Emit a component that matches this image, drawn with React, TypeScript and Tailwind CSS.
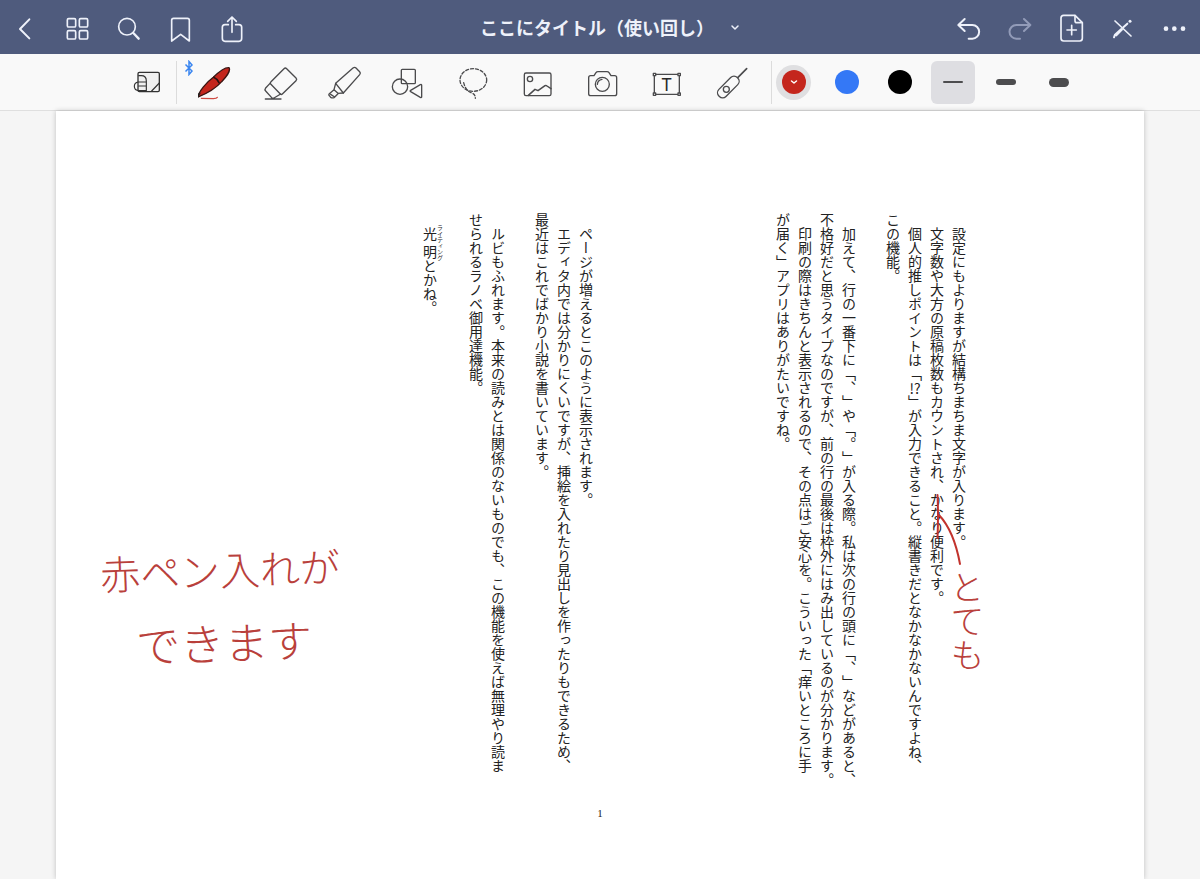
import type { ReactNode } from "react";

const Icon = ({ children, stroke = 4 }: { children: ReactNode; stroke?: number }) => (
  <svg
    viewBox="0 0 120 120"
    className="size-10 shrink-0"
    fill="none"
    stroke="currentColor"
    strokeWidth={stroke}
    strokeLinecap="round"
    strokeLinejoin="round"
    aria-hidden="true"
  >
    {children}
  </svg>
);

const leftActions = [
  { label: "戻る", icon: <path d="M70 37 42 66l28 28" strokeWidth="6" /> },
  {
    label: "サムネイル",
    icon: (
      <>
        <rect x="28" y="35" width="25" height="25" rx="4" />
        <rect x="64" y="35" width="25" height="25" rx="4" />
        <rect x="28" y="71" width="25" height="25" rx="4" />
        <rect x="64" y="71" width="25" height="25" rx="4" />
      </>
    ),
  },
  {
    label: "検索",
    icon: (
      <>
        <circle cx="51" cy="59" r="25" />
        <path d="M70 78l16 17" strokeWidth="7" />
      </>
    ),
  },
  { label: "ブックマーク", icon: <path d="M29 40q0-6 6-6h41q6 0 6 6v62L56 82 29 102z" /> },
  {
    label: "共有",
    icon: (
      <>
        <path d="M43 53H33q-8 0-8 8v33q0 9 8 9h42q8 0 8-9V61q0-8-8-8H65" />
        <path d="M54 76V30M41 43l13-13 13 13" />
      </>
    ),
  },
];

const rightActions = [
  {
    label: "元に戻す",
    icon: <path d="M56 36 37 54l19 18M38 54h41a20.500 20.500 0 0 1 0 41H68" strokeWidth="6" />,
  },
  {
    label: "やり直す",
    muted: true,
    icon: <path d="M78 36l19 18-19 18M96 54H55a20.500 20.500 0 0 0 0 41h11" strokeWidth="6" />,
  },
  {
    label: "ページを追加",
    icon: (
      <>
        <path d="M75 25H41q-8 0-8 8v61q0 8 8 8h48q8 0 8-8V47z" />
        <path d="M75 26v15q0 6 6 6h15M65 55v28M51 69h28" />
      </>
    ),
  },
  {
    label: "閲覧モード",
    icon: (
      <>
        <path d="M39 42l48 45" />
        <path d="M36 91l3-8 19-17M43 85l17-17M64 61l12-11" strokeWidth="6" />
        <path d="M84 43v0" strokeWidth="9" />
      </>
    ),
  },
  {
    label: "その他",
    icon: (
      <g fill="currentColor" stroke="none">
        <circle cx="36" cy="65" r="7" />
        <circle cx="61" cy="65" r="7" />
        <circle cx="87" cy="65" r="7" />
      </g>
    ),
  },
];

const tools = [
  {
    label: "ペン",
    icon: (
      <>
        <path
          d="M-2 106C3 89 24 62 46 46 61 31 80 16 93 17c5 8-6 26-22 42C51 82 21 97-2 106z"
          fill="#c4261d"
          stroke="#3a1512"
        />
        <path d="M47 46q10 4 16 16" stroke="#2a1210" strokeWidth="5" />
        <path d="M-2 106l7-12" stroke="#222" strokeWidth="5" />
        <path d="M10 109l36 1q10-1 12-4" stroke="#cf4a42" strokeWidth="3.500" />
      </>
    ),
  },
  {
    label: "消しゴム",
    icon: (
      <>
        <path d="M27 59 66 20q4-4 8 0l28 28q4 4 0 8L61 96q-3 3-6 0L26 66q-3-3 1-7z" />
        <path d="M24 64 11 78q-4 5 0 9l18 20q3 3 7 1l20-12M10 111h47" />
      </>
    ),
  },
  {
    label: "蛍光ペン",
    icon: (
      <>
        <path d="M29 64 81 18q5-4 9 0l11 11q4 4 0 9L52 93z" />
        <path d="M29 64l-5 19 12 11 16-1M24 83 10 95q-3 3 0 6l4 5q5 3 10 1l12-12M14 97l12 8" />
      </>
    ),
  },
  {
    label: "図形",
    icon: (
      <>
        <rect x="34" y="22" width="42" height="43" rx="3" />
        <circle cx="30" cy="74" r="23" />
        <path d="M91 68q4-2 4 2v34q0 4-4 2L62 89q-3-2 0-4z" />
      </>
    ),
  },
  {
    label: "なげなわ",
    icon: (
      <g strokeDasharray="9 6">
        <ellipse cx="58" cy="54" rx="40" ry="34" />
        <path d="M29 62c4 16 10 25 24 31 8 3 11 8 11 16" />
      </g>
    ),
  },
  {
    label: "画像",
    icon: (
      <>
        <rect x="19" y="33" width="80" height="68" rx="5" />
        <circle cx="36" cy="51" r="8" />
        <path d="M31 100l20-18 9 4 21-15q3-2 6 1l12 8" strokeWidth="4.500" />
      </>
    ),
  },
  {
    label: "カメラ",
    icon: (
      <>
        <path d="M26 41h10l6-9q2-3 6-3h27q4 0 6 3l6 9h11q6 0 6 6v48q0 6-6 6H26q-6 0-6-6V47q0-6 6-6z" />
        <circle cx="61" cy="67" r="21" />
        <path d="M46 67q1-13 14-15" />
      </>
    ),
  },
  {
    label: "テキスト",
    icon: (
      <>
        <rect x="25" y="37" width="75" height="60" />
        <g fill="#f9f9f9">
          <rect x="22" y="34" width="7" height="7" />
          <rect x="96" y="34" width="7" height="7" />
          <rect x="22" y="93" width="7" height="7" />
          <rect x="96" y="93" width="7" height="7" />
        </g>
        <text
          x="62"
          y="86"
          textAnchor="middle"
          fontSize="52"
          fontFamily="Inter, sans-serif"
          fill="#2a2a2a"
          stroke="none"
        >
          T
        </text>
      </>
    ),
  },
  {
    label: "レーザーポインタ",
    icon: (
      <>
        <rect x="16" y="60" width="78" height="30" rx="14" transform="rotate(-45 55 75)" />
        <circle cx="49" cy="82" r="9" />
        <path d="M84 46l26-26" strokeWidth="5" />
      </>
    ),
  },
];

const thicknesses = [
  { label: "細い", bar: "h-0.5", selected: true },
  { label: "普通", bar: "h-1.5" },
  { label: "太い", bar: "h-[9px]" },
];

const rightPage: ReactNode[] = [
  "　設定にもよりますが結構ちまちま文字が入ります。",
  "　文字数や大方の原稿枚数もカウントされ、かなり便利です。",
  <>
    {"　個人的推しポイントは「"}
    <span className="[text-combine-upright:all]">!?</span>
    {"」が入力できること。縦書きだとなかなかないんですよね、"}
  </>,
  "この機能。",
  "",
  "　加えて、行の一番下に「、」や「。」が入る際。私は次の行の頭に「、」などがあると、",
  "不格好だと思うタイプなのですが、前の行の最後は枠外にはみ出しているのが分かります。",
  "　印刷の際はきちんと表示されるので、その点はご安心を。こういった「痒いところに手",
  "が届く」アプリはありがたいですね。",
];

const leftPage: ReactNode[] = [
  "　ページが増えるとこのように表示されます。",
  "　エディタ内では分かりにくいですが、挿絵を入れたり見出しを作ったりもできるため、",
  "最近はこれでばかり小説を書いています。",
  "",
  "　ルビもふれます。本来の読みとは関係のないものでも、この機能を使えば無理やり読ま",
  "せられるラノベ御用達機能。",
  "",
  <>
    {"　"}
    <ruby>
      光明<rt className="text-[6px]">ライティング</rt>
    </ruby>
    とかね。
  </>,
];

const Page = ({ lines }: { lines: ReactNode[] }) => (
  <section className="h-[580px] whitespace-nowrap text-sm/[22px] text-[#222] [text-spacing-trim:space-all] [writing-mode:vertical-rl]">
    {lines.map((line, i) => (
      <p key={i} className="w-[22px]">
        {line}
      </p>
    ))}
  </section>
);

const Header = () => (
  <header className="grid h-[54px] grid-cols-[1fr_auto_1fr] items-center bg-[#4f5b7d] text-[#eef1fa]">
    <nav className="flex">
      {leftActions.map(({ label, icon }) => (
        <button key={label} aria-label={label} className="flex h-[54px] w-[52px] items-center justify-center">
          <Icon stroke={5}>{icon}</Icon>
        </button>
      ))}
    </nav>
    <button className="flex items-center gap-4 pl-5 text-lg font-bold">
      <h1>ここにタイトル（使い回し）</h1>
      <svg viewBox="0 0 10 10" className="size-2.5" fill="none" stroke="currentColor" strokeWidth="1.500" aria-hidden="true">
        <path d="M2 4l3 3 3-3" strokeLinecap="round" strokeLinejoin="round" />
      </svg>
    </button>
    <div className="flex justify-end">
      {rightActions.map(({ label, icon, muted }) => (
        <button
          key={label}
          aria-label={label}
          className={`flex h-[54px] w-[52px] items-center justify-center ${muted ? "text-[#929bb8]" : ""}`}
        >
          <Icon stroke={5}>{icon}</Icon>
        </button>
      ))}
    </div>
  </header>
);

const Toolbar = () => (
  <div className="flex h-[57px] items-center justify-center border-b border-[#dfdfdf] bg-[#f9f9f9] text-[#4b4b4d]">
    <button aria-label="拡大ウインドウ" className="flex w-14 justify-center text-[#333]">
      <Icon>
        <rect x="30" y="31" width="64" height="58" rx="4" fill="#f0f0f0" />
        <path
          d="M32 41h8q15 0 15 16v30M55 60H31q-12 2-12 13 0 13 14 13h22M32 72h22M94 63 71 87"
          strokeWidth="3.500"
        />
      </Icon>
    </button>
    <span className="mr-[9px] h-[43px] w-px bg-[#dcdcdc]" />
    {tools.map(({ label, icon }, i) => (
      <button key={label} aria-label={label} className="relative flex w-16 justify-center">
        {i === 0 && (
          <svg
            viewBox="0 0 10 16"
            className="absolute -top-0.5 -left-0.5 h-4 w-2.5"
            fill="none"
            stroke="#3b86f0"
            strokeWidth="1.500"
            aria-hidden="true"
          >
            <path d="M1.500 4.500 8 11l-3 3.500v-13L8 5l-6.500 6.500" />
          </svg>
        )}
        <Icon>{icon}</Icon>
      </button>
    ))}
    <span className="ml-[9px] h-[43px] w-px bg-[#dcdcdc]" />
    <div className="flex items-center gap-[9px]">
      <button aria-label="赤" className="flex w-11 justify-center">
        <span className="flex size-[35px] items-center justify-center rounded-full bg-[#dfdfe1]">
          <span className="flex size-6 items-center justify-center rounded-full bg-[#c4261d]">
            <svg viewBox="0 0 10 10" className="size-2.5" fill="none" stroke="#fff" strokeWidth="1.500" aria-hidden="true">
              <path d="M2.500 4 5 6l2.500-2" strokeLinecap="round" strokeLinejoin="round" />
            </svg>
          </span>
        </span>
      </button>
      <button aria-label="青" className="flex w-11 justify-center">
        <span className="size-6 rounded-full bg-[#3478f6]" />
      </button>
      <button aria-label="黒" className="flex w-11 justify-center">
        <span className="size-6 rounded-full bg-black" />
      </button>
      {thicknesses.map(({ label, bar, selected }) => (
        <button
          key={label}
          aria-label={label}
          className={`flex h-[43px] w-11 items-center justify-center rounded-md ${selected ? "bg-[#dedee2]" : ""}`}
        >
          <span className={`w-5 rounded-full bg-[#4d4d4f] ${bar}`} />
        </button>
      ))}
    </div>
  </div>
);

const App = () => {
  return (
    <div className="flex min-h-screen flex-col bg-[#f5f5f5] font-['Noto_Sans_CJK_JP',sans-serif]">
      <Header />
      <Toolbar />
      <main className="flex flex-1 flex-col px-14">
        <article className="relative flex-1 bg-white shadow-[0_0_5px_rgba(0,0,0,0.22)]">
          <div className="flex flex-row-reverse gap-[175px] pt-[102px] pr-[174px]">
            <Page lines={rightPage} />
            <Page lines={leftPage} />
          </div>
          <footer className="mt-3 text-center font-['Liberation_Serif',serif] text-[11px]/4 text-[#222]">1</footer>

          {/* 赤ペンの書き込み */}
          <p className="absolute top-[438px] left-11 -rotate-2 text-[40px]/10 font-light text-[#b9403b]">赤ペン入れが</p>
          <p className="absolute top-[510px] left-20 -rotate-2 text-[44px]/10 font-light text-[#b9403b]">できます</p>
          <svg
            viewBox="0 0 35 80"
            className="absolute top-[379px] right-[179px] h-20 w-[35px]"
            fill="none"
            stroke="#c2332d"
            strokeWidth="2"
            strokeLinecap="round"
            aria-hidden="true"
          >
            <path d="M7.500 5q1 20 0 43M9 25q15 16 21 49" />
          </svg>
          <p className="absolute top-[459px] right-[160px] text-[34px]/[34px] font-light text-[#b9403b] [writing-mode:vertical-rl]">
            とても
          </p>
        </article>
      </main>
    </div>
  );
};

export default App;
